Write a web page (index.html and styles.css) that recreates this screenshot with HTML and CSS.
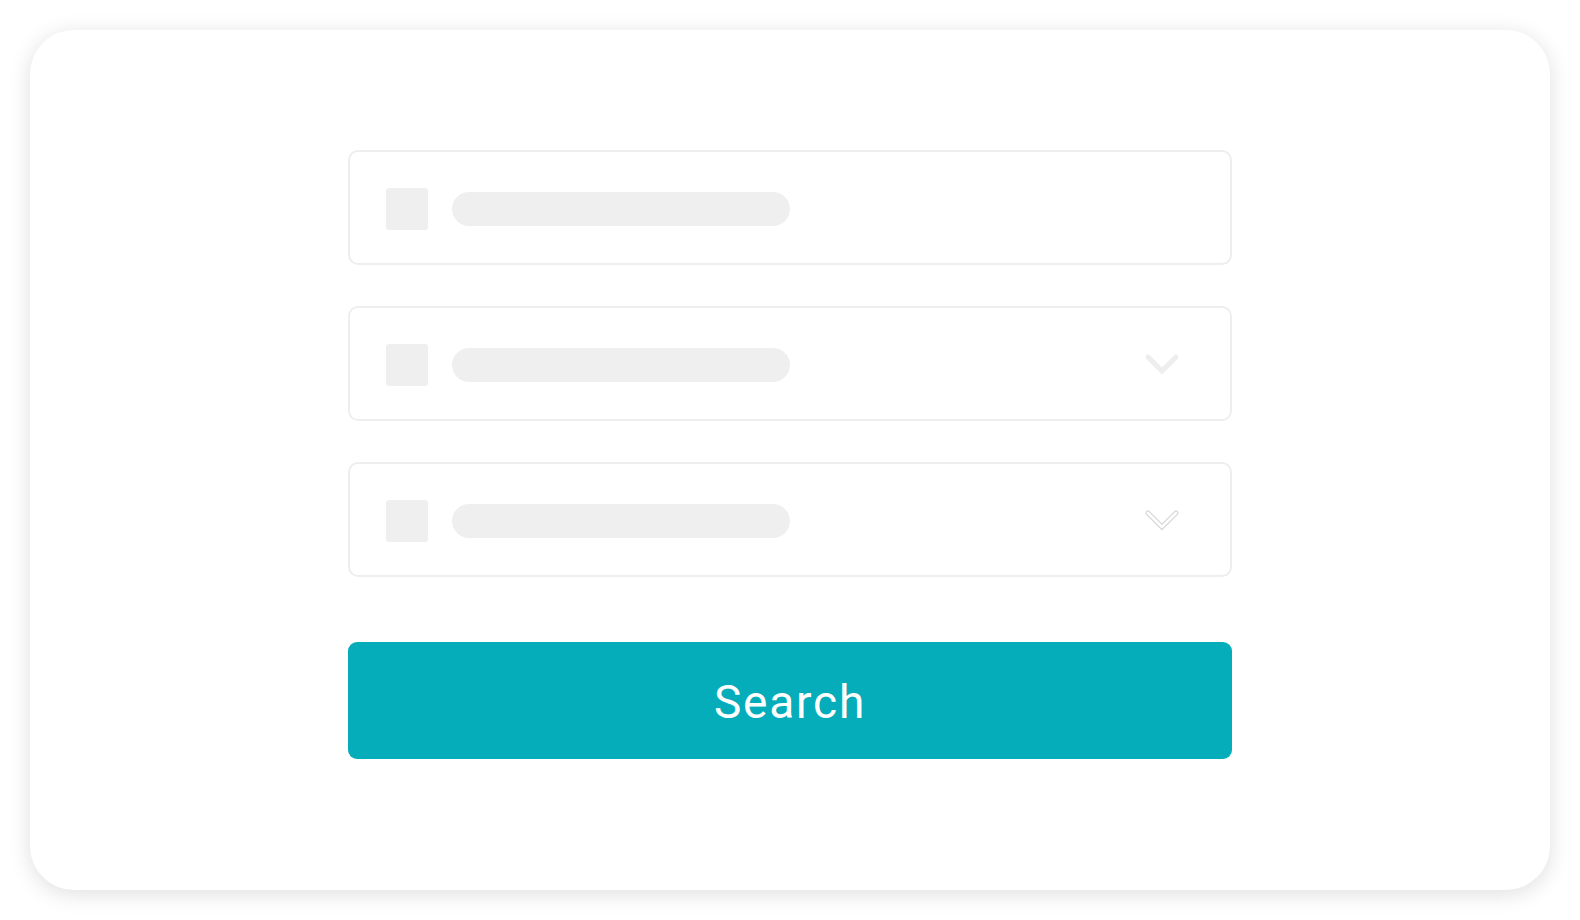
FILE: index.html
```html
<!DOCTYPE html>
<html>
<head>
<meta charset="utf-8">
<link rel="stylesheet" href="styles.css">
</head>
<body>
<div class="card">
  <div class="form">
    <div class="field">
      <span class="ico"></span>
      <span class="pill"></span>
    </div>
    <div class="field">
      <span class="ico"></span>
      <span class="pill"></span>
      <svg class="chev" width="36" height="24" viewBox="0 0 36 24"><path d="M4 4 L18 18 L32 4" fill="none" stroke="#eeeeee" stroke-width="5" stroke-linecap="round" stroke-linejoin="miter"/></svg>
    </div>
    <div class="field">
      <span class="ico"></span>
      <span class="pill"></span>
      <svg class="chev" width="36" height="24" viewBox="0 0 36 24"><path d="M4 4 L18 18 L32 4" fill="none" stroke="#d6d6d6" stroke-width="5" stroke-linecap="round" stroke-linejoin="miter"/><path d="M4 4 L18 18 L32 4" fill="none" stroke="#ffffff" stroke-width="2.6" stroke-linecap="round" stroke-linejoin="miter"/></svg>
    </div>
    <button class="btn">Search</button>
  </div>
</div>
</body>
</html>
```
FILE: styles.css
```css
html, body {
  margin: 0;
  padding: 0;
  background: #ffffff;
}
body {
  width: 1580px;
  height: 920px;
  overflow: hidden;
  font-family: "Open Sans", "Liberation Sans", sans-serif;
}
.card {
  margin: 30px;
  width: 1520px;
  height: 860px;
  box-sizing: border-box;
  background: #ffffff;
  border-radius: 44px;
  box-shadow: 0 4px 22px rgba(0, 0, 0, 0.13);
  display: flex;
  justify-content: center;
  padding-top: 120px;
}
.form {
  width: 884px;
  display: flex;
  flex-direction: column;
  gap: 41px;
}
.field {
  height: 115px;
  box-sizing: border-box;
  border: 2px solid #eeeeee;
  border-radius: 10px;
  display: flex;
  align-items: center;
  padding-left: 36px;
  padding-right: 50px;
  padding-top: 2px;
}
.ico {
  width: 42px;
  height: 42px;
  border-radius: 3px;
  background: #efefef;
  flex: none;
}
.pill {
  width: 338px;
  height: 34px;
  border-radius: 17px;
  background: #efefef;
  margin-left: 24px;
  flex: none;
}
.chev {
  margin-left: auto;
  flex: none;
}
.btn {
  margin-top: 24px;
  height: 117px;
  border: none;
  border-radius: 9px;
  background: #05acb9;
  color: #ffffff;
  font-family: Roboto, "Open Sans", sans-serif;
  font-size: 46px;
  font-weight: 400;
  letter-spacing: 1.8px;
  padding: 0;
  padding-top: 2px;
}
```
